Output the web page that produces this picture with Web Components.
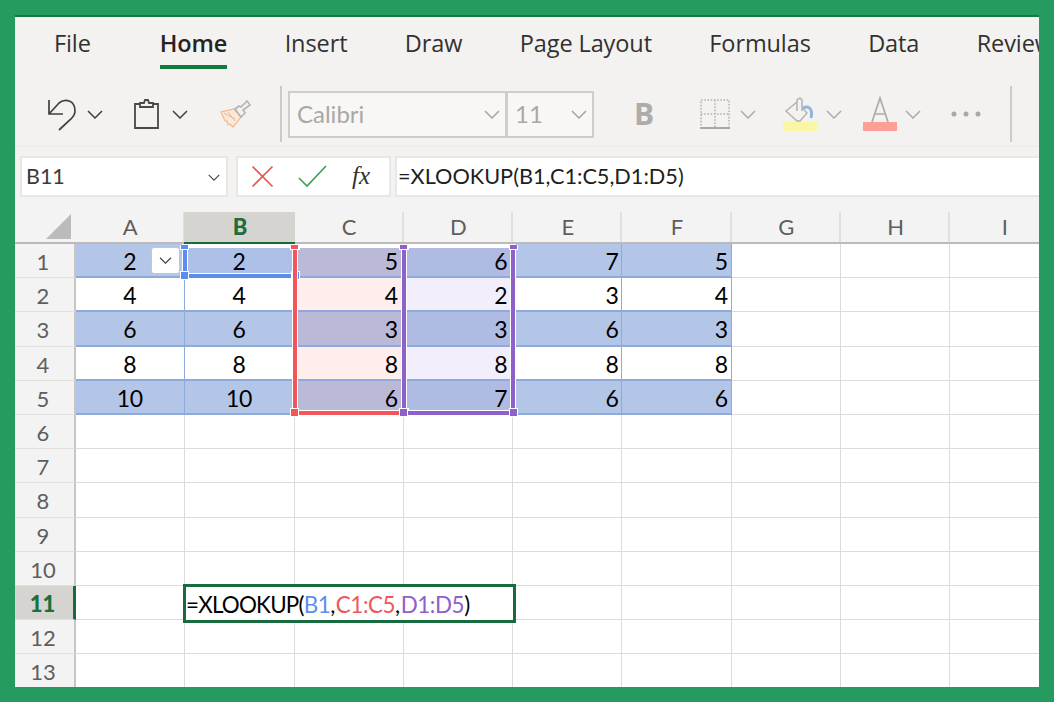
<!DOCTYPE html>
<html><head><meta charset="utf-8"><style>
html,body{margin:0;height:100%;overflow:hidden}
body{background:#259b5f;font-family:"Lato",sans-serif}
</style></head><body>
<x-app>
  <x-ribbon></x-ribbon>
  <x-formula-bar></x-formula-bar>
  <x-sheet></x-sheet>
</x-app>
<script>
const def=(n,css,html,init)=>customElements.define(n,class extends HTMLElement{
  connectedCallback(){ if(this.shadowRoot)return; const r=this.attachShadow({mode:'open'}); r.innerHTML='<style>'+css+'</style>'+html; if(init)init(r,this);}
});
const chev=(c='#444',w=16,h=9)=>`<svg width="${w}" height="${h}" viewBox="0 0 16 9" fill="none"><path d="M1 1l7 7 7-7" stroke="${c}" stroke-width="1.5"/></svg>`;

def('x-app',`:host{box-sizing:border-box;margin:15px 15px 0;width:1024px;height:672px;overflow:hidden;border-top:2px solid #0f7d43;background:#f3f2f1;display:flex;flex-direction:column}
::slotted(*){flex:none}`,`<slot></slot>`);

def('x-tab',`:host{display:block;position:relative;font:23.5px/1 "Open Sans",sans-serif;color:#323130;white-space:nowrap;letter-spacing:-.1px}
:host([active]){font-weight:600;color:#252423}
:host([active])::after{content:"";position:absolute;left:0;right:0;top:33px;height:4px;background:#107c41}`,`<slot></slot>`);

def('x-select',`:host{display:flex;align-items:center;justify-content:space-between;box-sizing:border-box;height:47px;border:2px solid #cfcdcb;background:#f8f7f6;color:#a9a8a6;font:24px/1 "Lato",sans-serif;padding:0 5px 0 7px}`,`<slot></slot>${chev('#a5a4a2')}`);

def('x-ribbon',`:host{display:block;height:130px;box-sizing:border-box;border-bottom:1px solid #eceae8;overflow:hidden}
.tabs{display:flex;gap:57.4px;padding:15px 0 0 39px;height:40px;margin-bottom:12px;box-sizing:content-box}
.tabs x-tab:first-child{margin-right:11.5px}
.bar{display:flex;align-items:center;height:60px;position:relative}
.sep{width:2px;height:56px;background:#cdcbc9;flex:none}
svg{flex:none;display:block}
x-select{flex:none}
.b{font:700 30px/1 "Open Sans",sans-serif;color:#adacaa;width:22px}
`,`<div class="tabs">
<x-tab>File</x-tab><x-tab active>Home</x-tab><x-tab>Insert</x-tab><x-tab>Draw</x-tab><x-tab>Page Layout</x-tab><x-tab>Formulas</x-tab><x-tab>Data</x-tab><x-tab>Review</x-tab></div>
<div class="bar">
<svg style="margin-left:31px" width="32" height="36" viewBox="0 0 32 36" fill="none" stroke="#404040" stroke-width="1.7"><path d="M3 4v14h14M3 18L13 7c6-5 16-3 16 8 0 4-2 6-4 8L13 34"/></svg>
<span style="margin-left:9px;display:flex">${chev('#404040')}</span>
<svg style="margin-left:30px" width="26" height="32" viewBox="0 0 26 32" fill="none" stroke="#484848" stroke-width="1.8"><path d="M7 6H2v24h23V6h-5"/><path d="M7 9V5h4l1-3h3l1 3h4v4z"/></svg>
<span style="margin-left:13px;display:flex">${chev('#404040')}</span>
<svg style="margin-left:32px" width="32" height="28" viewBox="0 0 32 28" fill="none"><path d="M1 12l13-3 7 8-8 10-3-3-2 1-1-4-2 0z" fill="#fae9d8" stroke="#efb78c" stroke-width="1.2"/><path d="M4 13l11 6M8 12l7 9" stroke="#efb78c" stroke-width="1"/><path d="M15 9l6 8 4-4-2-3 7-5-3-4-6 6-2-1z" fill="#f3f2f1" stroke="#b5b4b2" stroke-width="1.6"/></svg>
<div class="sep" style="margin-left:28px"></div>
<x-select style="margin-left:6px;width:219px">Calibri</x-select>
<x-select style="width:88px;margin-left:-1px">11</x-select>
<span class="b" style="margin-left:40px">B</span>
<svg style="margin-left:44px" width="30" height="30" viewBox="0 0 30 30" fill="none"><path d="M1 1h28v28H1zM15 1v28M1 15h28" stroke="#b5b4b2" stroke-width="1.6" stroke-dasharray="1.6 1.6"/><path d="M0 29h30" stroke="#a9a8a6" stroke-width="2"/></svg>
<span style="margin-left:10px;display:flex">${chev('#acabaa')}</span>
<svg style="margin-left:27px" width="36" height="34" viewBox="0 0 36 34" fill="none"><path d="M3 14L14 5l10 11-7 8-3 0z" stroke="#b4b3b1" stroke-width="1.5"/><path d="M14 14V3l3-2 2 2v11" stroke="#b4b3b1" stroke-width="1.5" fill="#f3f2f1"/><path d="M20 11c6-3 10 1 8 10" stroke="#8fb7dc" stroke-width="3"/><rect y="25" x="0" width="34" height="9" fill="#f9f7a5"/></svg>
<span style="margin-left:7px;display:flex">${chev('#acabaa')}</span>
<span style="margin-left:21px;width:34px;height:36px;position:relative;flex:none;display:block"><svg width="34" height="36" viewBox="0 0 34 36" fill="none"><path d="M9 26L17 2l8 24M11 18h12" stroke="#acabaa" stroke-width="1.7"/><rect y="26" width="34" height="9" fill="#fc9f99"/></svg></span>
<span style="margin-left:8px;display:flex">${chev('#acabaa')}</span>
<svg style="margin-left:30px" width="30" height="6" viewBox="0 0 30 6" fill="#a9a8a6"><circle cx="3" cy="3" r="2.5"/><circle cx="15" cy="3" r="2.5"/><circle cx="27" cy="3" r="2.5"/></svg>
<div class="sep" style="margin-left:29px"></div>
</div>`);

def('x-formula-bar',`:host{display:flex;height:51px;box-sizing:border-box;padding:9px 0 0 5px;flex:none;background:#f3f2f1}
.box{box-sizing:border-box;height:41px;border:2px solid #e8e7e6;background:#fff;display:flex;align-items:center}
.name{width:208px;padding:1px 6px 0 4px;justify-content:space-between;font:21.5px/1 "Lato",sans-serif;color:#3b3a39}
.fn{width:155px;margin-left:8px;position:relative}
.input{flex:1;margin-left:4px;border-right:0;font:21.7px/1 "Lato",sans-serif;color:#201f1e;padding-left:1px}
i{font:italic 25px/1 "Liberation Serif",serif;color:#333;margin-top:-2px}
svg{flex:none;display:block}
`,`<div class="box name"><span>B11</span>${chev('#444',12,7)}</div>
<div class="box fn"><svg style="margin-left:13px" width="23" height="23" viewBox="0 0 23 23" fill="none"><path d="M1.5 1.5l20 20M21.5 1.5l-20 20" stroke="#f1534f" stroke-width="1.7"/></svg>
<svg style="margin-left:24px" width="29" height="23" viewBox="0 0 29 23" fill="none"><path d="M1 13l8 8L28 1" stroke="#38a154" stroke-width="1.6"/></svg>
<i style="margin-left:25px">fx</i></div>
<div class="box input">=XLOOKUP(B1,C1:C5,D1:D5)</div>`);

def('x-range',`:host{display:block;position:relative;box-sizing:border-box;pointer-events:none;grid-column:var(--col);grid-row:var(--row);margin:1px -2px 0 -2px;border:4px solid var(--c);border-top:2px solid #fff;box-shadow:0 0 0 1px #fff,inset 0 0 0 1px #fff}
b{position:absolute;background:var(--c);box-sizing:content-box}
.tl,.tr{top:-2px;width:7px;height:4px;border:1.5px solid #fff;border-top:0}
.bl,.br{bottom:-6px;width:7px;height:7px;border:1.5px solid #fff}
.tl,.bl{left:-7px}.tr,.br{right:-7px}`,
`<b class="tl"></b><b class="tr"></b><b class="bl"></b><b class="br"></b>`);

def('x-sheet',`:host{display:grid;height:490px;grid-template-columns:61px 108.5px 110px repeat(7,109.3px);grid-template-rows:46px repeat(13,34.2px);background:#fff;overflow:hidden;font:23px/1 "Lato",sans-serif;color:#000;flex:none}
.ch,.rh,.corner{color:#605e5c;font-size:22px;background:#f3f3f3;display:flex;align-items:center;justify-content:center;box-sizing:border-box;position:relative}
.ch,.corner{border-bottom:2px solid #bdbbb9;padding-top:14px}
.ch::before{content:"";position:absolute;right:0;top:14px;bottom:0;width:2px;background:#e1e0df}
.ch.sel{font-weight:900;color:#1a6f3f;background:linear-gradient(#f3f3f3 14px,#d6d4d0 14px);border-bottom:2.5px solid #176b3c;margin:0 -2px 0 -1px}
.ch.sel::before{background:#b9b7b4}
.corner::after{content:"";position:absolute;left:31px;top:16px;width:0;height:0;border-style:solid;border-width:0 0 25px 25px;border-color:transparent transparent #bdbbb9 transparent}
.rh{border-right:2.5px solid #c8c6c4;border-bottom:1px solid #e1e0df;padding-right:3px;padding-top:3px}
.rh.sel{font-weight:900;color:#1a6f3f;background:#d6d4d0;border-right:3px solid #176b3c}
.c{box-sizing:border-box;border-right:1.5px solid #dcdcdc;border-bottom:1.5px solid #dcdcdc;display:flex;align-items:center;padding:3px 3px 0 1px;justify-content:flex-end;white-space:nowrap;letter-spacing:-.4px;position:relative}
.ctr{justify-content:center;padding-right:1px}
.t{border-color:#8eaadb;border-bottom-width:2px}
.band{background:#b4c6e7}
.pad{padding-right:5px}
.ed{grid-column:3/6;grid-row:12/13;margin:-2px -2.5px -3px -1.5px;border:3px solid #176b3c;background:#fff;z-index:4;display:flex;align-items:center;font-size:22.4px;padding:3px 0 0 0;box-sizing:border-box;white-space:nowrap;letter-spacing:-.45px}
.ed u{text-decoration:none;letter-spacing:-.8px}
.ed s{text-decoration:none;margin-left:1px}
.dd{position:absolute;z-index:2;right:4px;top:3px;width:29px;height:27px;background:#fff;border:1px solid #c8c6c4;border-radius:3px;display:flex;align-items:center;justify-content:center;box-sizing:border-box}
`,``,(r)=>{
  const data=[[2,2,5,6,7,5],[4,4,4,2,3,4],[6,6,3,3,6,3],[8,8,8,8,8,8],[10,10,6,7,6,6]];
  const tint={c:['#bbb9d8','#ffeeeb'],d:['#b0bbe4','#f2eefb']};
  let h='<div class="corner" style="grid-area:1/1"></div>';
  'ABCDEFGHI'.split('').forEach((l,i)=>h+=`<div class="ch${l=='B'?' sel':''}" style="grid-area:1/${i+2}">${l}</div>`);
  for(let y=0;y<13;y++){
    h+=`<div class="rh${y==10?' sel':''}" style="grid-area:${y+2}/1">${y+1}</div>`;
    for(let x=0;x<9;x++){
      const pos=`grid-area:${y+2}/${x+2};`;
      if(y<5&&x<6){
        const band=y%2==0;let st=pos;
        if(x==2)st+=`background:${tint.c[band?0:1]}`;
        if(x==3)st+=`background:${tint.d[band?0:1]}`;
        if(x==1&&y==0)st+='background:#adc1e8';
        h+=`<div class="c t ${band?'band':''} ${x<2?'ctr':''} ${x==2||x==3?'pad':''}" style="${st}">${data[y][x]}${x==0&&y==0?`<span class="dd">${chev('#444',13,7)}</span>`:''}</div>`;
      } else h+=`<div class="c" style="${pos}"></div>`;
    }
  }
  h+=`<div class="ed"><u>=XLOOKUP(</u><span style="color:#5b8def">B1</span><span>,</span><s style="color:#f0565a">C1:C5</s><span>,</span><s style="color:#8e60c9">D1:D5</s><span>)</span></div>`;
  h+=`<x-range style="--c:#5b8def;--col:3/4;--row:2/3"></x-range><x-range style="--c:#f0565a;--col:4/5;--row:2/7"></x-range><x-range style="--c:#8e60c9;--col:5/6;--row:2/7"></x-range>`;
  r.innerHTML+=h;
});
</script>
</body></html>
